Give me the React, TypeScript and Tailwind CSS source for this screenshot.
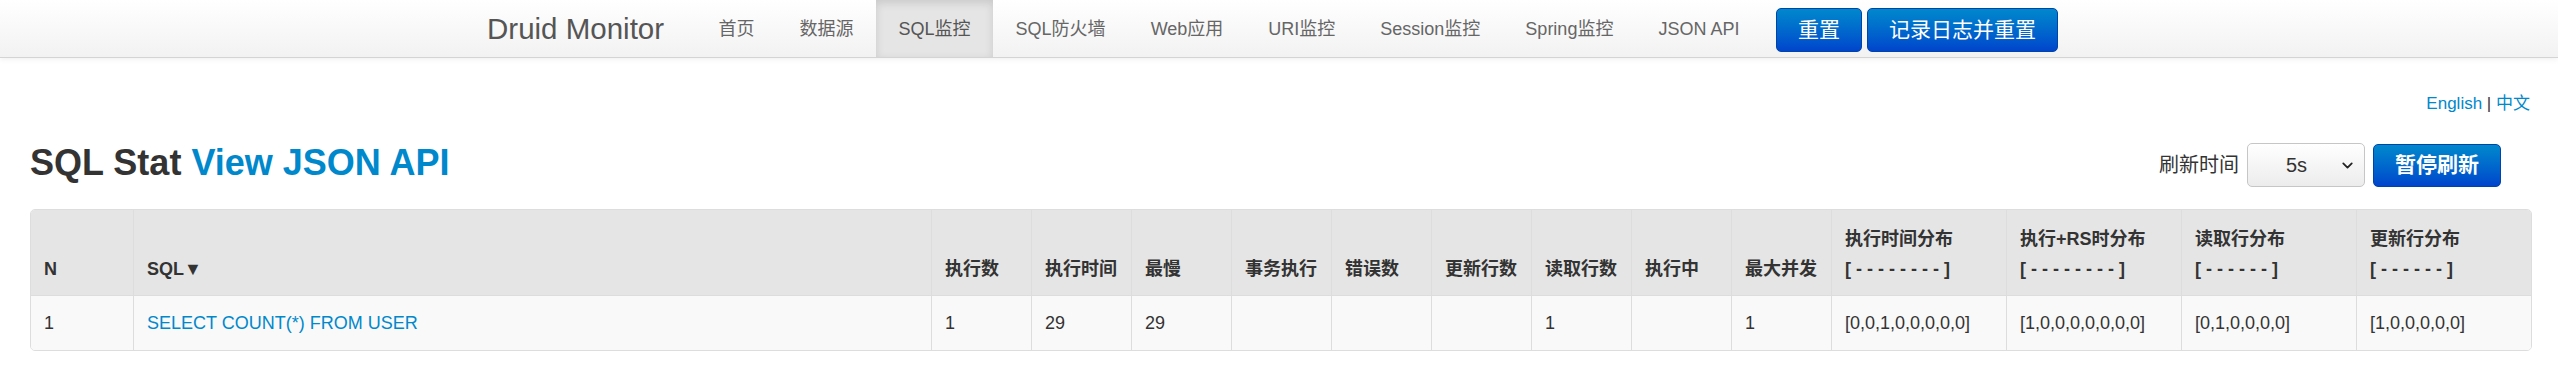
import { ChevronDown } from "lucide-react";

const navItems = [
  "首页",
  "数据源",
  "SQL监控",
  "SQL防火墙",
  "Web应用",
  "URI监控",
  "Session监控",
  "Spring监控",
  "JSON API",
];

const headers: { title: string; sub?: string }[] = [
  { title: "N" },
  { title: "SQL▼" },
  { title: "执行数" },
  { title: "执行时间" },
  { title: "最慢" },
  { title: "事务执行" },
  { title: "错误数" },
  { title: "更新行数" },
  { title: "读取行数" },
  { title: "执行中" },
  { title: "最大并发" },
  { title: "执行时间分布", sub: "[ - - - - - - - - ]" },
  { title: "执行+RS时分布", sub: "[ - - - - - - - - ]" },
  { title: "读取行分布", sub: "[ - - - - - - ]" },
  { title: "更新行分布", sub: "[ - - - - - - ]" },
];

const colWidths = [102, 798, 100, 100, 100, 100, 100, 100, 100, 100, 100, 175, 175, 175, 175];

const row = [
  "1",
  "SELECT COUNT(*) FROM USER",
  "1",
  "29",
  "29",
  "",
  "",
  "",
  "1",
  "",
  "1",
  "[0,0,1,0,0,0,0,0]",
  "[1,0,0,0,0,0,0,0]",
  "[0,1,0,0,0,0]",
  "[1,0,0,0,0,0]",
];

function Navbar() {
  return (
    <div className="h-[58px] border-b border-[#d4d4d4] bg-gradient-to-b from-white to-[#f2f2f2] shadow-[0_1px_6px_rgba(0,0,0,0.07)]">
      <div className="mx-auto flex h-[57px] w-[1584px] items-stretch">
        <div className="flex items-center text-[29.5px] leading-[34px] text-[#555]">Druid Monitor</div>
        <ul className="ml-[32px] flex items-stretch">
          {navItems.map((item) => (
            <li
              key={item}
              className={
                item === "SQL监控"
                  ? "flex items-center bg-[#e5e5e5] px-[22.5px] pt-[2px] text-[18px] text-[#555] shadow-[inset_0_3px_8px_rgba(0,0,0,0.125)]"
                  : "flex items-center px-[22.5px] pt-[2px] text-[18px] text-[#666]"
              }
            >
              {item}
            </li>
          ))}
        </ul>
        <div className="ml-[14px] mt-[8px] flex h-[44px] gap-[5px]">
          <button className="rounded-[5px] border border-[#0044aa] bg-gradient-to-b from-[#0088cc] to-[#0044cc] px-[21px] text-[21px] text-white">
            重置
          </button>
          <button className="rounded-[5px] border border-[#0044aa] bg-gradient-to-b from-[#0088cc] to-[#0044cc] px-[21px] text-[21px] text-white">
            记录日志并重置
          </button>
        </div>
      </div>
    </div>
  );
}

export default function App() {
  return (
    <div className="min-h-[390px] bg-white font-['Liberation_Sans','Noto_Sans_CJK_SC',sans-serif] text-[#333]">
      <Navbar />
      <div className="pl-[30px] pr-[28px]">
        <div className="mt-[33px] text-right text-[17px] leading-[25px]">
          <a className="text-[#0088cc]">English</a> | <a className="text-[#0088cc]">中文</a>
        </div>

        <div className="mt-[27px] flex items-start justify-between">
          <h3 className="text-[36px] font-bold leading-[40px]">
            SQL Stat <a className="text-[#0088cc]">View JSON API</a>
          </h3>
          <div className="mr-[29px] flex items-center gap-[8px]">
            <span className="text-[20px]">刷新时间</span>
            <div className="flex h-[44px] w-[118px] items-center rounded-[5px] border border-[#c6c6c6] bg-gradient-to-b from-white to-[#ececec] pl-[38px] pr-[8px]">
              <span className="flex-1 text-[20px]">5s</span>
              <ChevronDown size={17} strokeWidth={2.5} className="text-[#222]" />
            </div>
            <button className="h-[43px] rounded-[5px] border border-[#0044aa] bg-gradient-to-b from-[#0088cc] to-[#0044cc] px-[21px] text-[21px] font-bold text-white">
              暂停刷新
            </button>
          </div>
        </div>

        <table className="mt-[22px] w-full table-fixed border-separate border-spacing-0 rounded-[5px] border border-[#ddd] text-[18px]">
          <colgroup>
            {colWidths.map((w, i) => (
              <col key={i} style={{ width: w }} />
            ))}
          </colgroup>
          <thead>
            <tr className="bg-[#e5e5e5]">
              {headers.map((h, i) => (
                <th
                  key={i}
                  className={
                    (i === 0 ? "rounded-tl-[4px] " : "border-l border-[#ddd] ") +
                    (i === headers.length - 1 ? "rounded-tr-[4px] " : "") +
                    "px-[13px] pb-[11px] pt-[14px] text-left align-bottom font-bold leading-[30px] text-[#333]"
                  }
                >
                  {h.title}
                  {h.sub && (
                    <>
                      <br />
                      {h.sub}
                    </>
                  )}
                </th>
              ))}
            </tr>
          </thead>
          <tbody>
            <tr className="bg-[#f9f9f9]">
              {row.map((v, i) => (
                <td
                  key={i}
                  className={
                    (i === 0 ? "rounded-bl-[4px] " : "border-l ") +
                    (i === row.length - 1 ? "rounded-br-[4px] " : "") +
                    "border-t border-[#ddd] px-[13px] py-[12px] leading-[30px]"
                  }
                >
                  {i === 1 ? <a className="text-[#0088cc]">{v}</a> : v}
                </td>
              ))}
            </tr>
          </tbody>
        </table>
      </div>
    </div>
  );
}
